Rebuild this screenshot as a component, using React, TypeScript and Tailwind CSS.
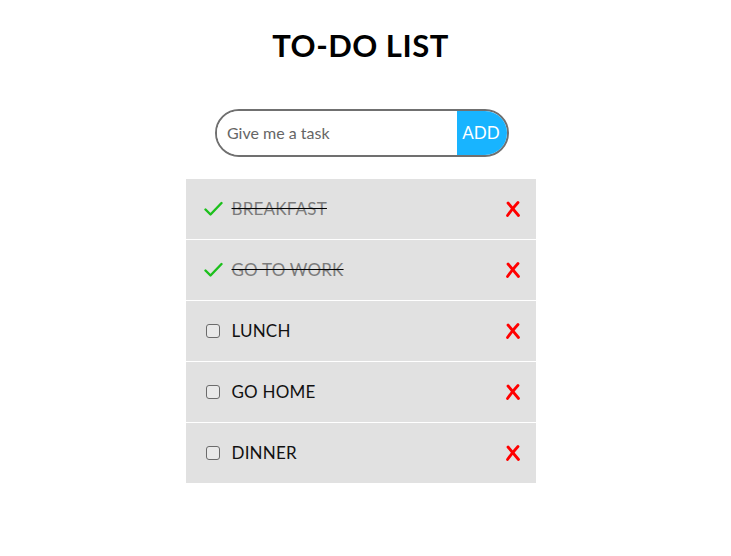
import React, { useState } from 'react';

interface Task {
  id: number;
  title: string;
  done: boolean;
}

const initialTasks: Task[] = [
  { id: 1, title: 'BREAKFAST', done: true },
  { id: 2, title: 'GO TO WORK', done: true },
  { id: 3, title: 'LUNCH', done: false },
  { id: 4, title: 'GO HOME', done: false },
  { id: 5, title: 'DINNER', done: false },
];

const CheckMark = () => (
  <svg width="19" height="16" viewBox="0 0 19 16" className="shrink-0">
    <path d="M1.5 8.5 L6.5 13.5 L17.5 2" fill="none" stroke="#1cc01c" strokeWidth="2.4" strokeLinecap="round" strokeLinejoin="round" />
  </svg>
);

const DeleteMark = () => (
  <svg width="14" height="16" viewBox="0 0 14 16">
    <path d="M2 2 Q7 8 12.5 14.5" fill="none" stroke="#ff0000" strokeWidth="2.8" strokeLinecap="round" />
    <path d="M12 1.5 Q6 8 1.5 14.5" fill="none" stroke="#ff0000" strokeWidth="2.8" strokeLinecap="round" />
  </svg>
);

const App: React.FC = () => {
  const [tasks, setTasks] = useState<Task[]>(initialTasks);
  const [text, setText] = useState('');

  const toggle = (id: number) =>
    setTasks(tasks.map((t) => (t.id === id ? { ...t, done: !t.done } : t)));

  const remove = (id: number) => setTasks(tasks.filter((t) => t.id !== id));

  const add = () => {
    if (!text.trim()) return;
    setTasks([...tasks, { id: Date.now(), title: text.toUpperCase(), done: false }]);
    setText('');
  };

  return (
    <div className="min-h-[556px] bg-white font-['Lato','Open_Sans',sans-serif] flex flex-col items-center">
      {/* Заголовок */}
      <h1 className="mt-[26px] ml-[-10px] text-[31px] leading-[38px] font-bold text-black tracking-[0.5px]">TO-DO LIST</h1>

      {/* Поле ввода */}
      <div className="mt-[45px] ml-[-7px] flex w-[294px] h-[48px] rounded-full border-2 border-[#707070] overflow-hidden">
        <input
          value={text}
          onChange={(e) => setText(e.target.value)}
          placeholder="Give me a task"
          className="flex-1 min-w-0 pl-[10px] text-[16px] text-[#555] placeholder:text-[#666] outline-none bg-white"
        />
        <button onClick={add} className="w-[50px] bg-[#18b4ff] text-white text-[17px] pr-[2px]">
          ADD
        </button>
      </div>

      {/* Список задач */}
      <ul className="mt-[22px] ml-[-10px] w-[350px] flex flex-col gap-px">
        {tasks.map((t) => (
          <li key={t.id} className="h-[60px] bg-[#e1e1e1] flex items-center pl-[18px] pr-[15px]">
            <button onClick={() => toggle(t.id)} className="w-[19px] flex items-center justify-start">
              {t.done ? (
                <CheckMark />
              ) : (
                <span className="block w-[14px] h-[14px] border border-[#6b6b6b] rounded-[3px] bg-[#e9e9e9] ml-[2px]" />
              )}
            </button>
            <span
              className={`ml-[9px] text-[17px] tracking-[0.2px] ${
                t.done ? 'text-[#7c7c7c] line-through decoration-black' : 'text-[#111]'
              }`}
            >
              {t.title}
            </span>
            <button onClick={() => remove(t.id)} className="ml-auto mr-[1px] flex items-center">
              <DeleteMark />
            </button>
          </li>
        ))}
      </ul>
    </div>
  );
};

export default App;
